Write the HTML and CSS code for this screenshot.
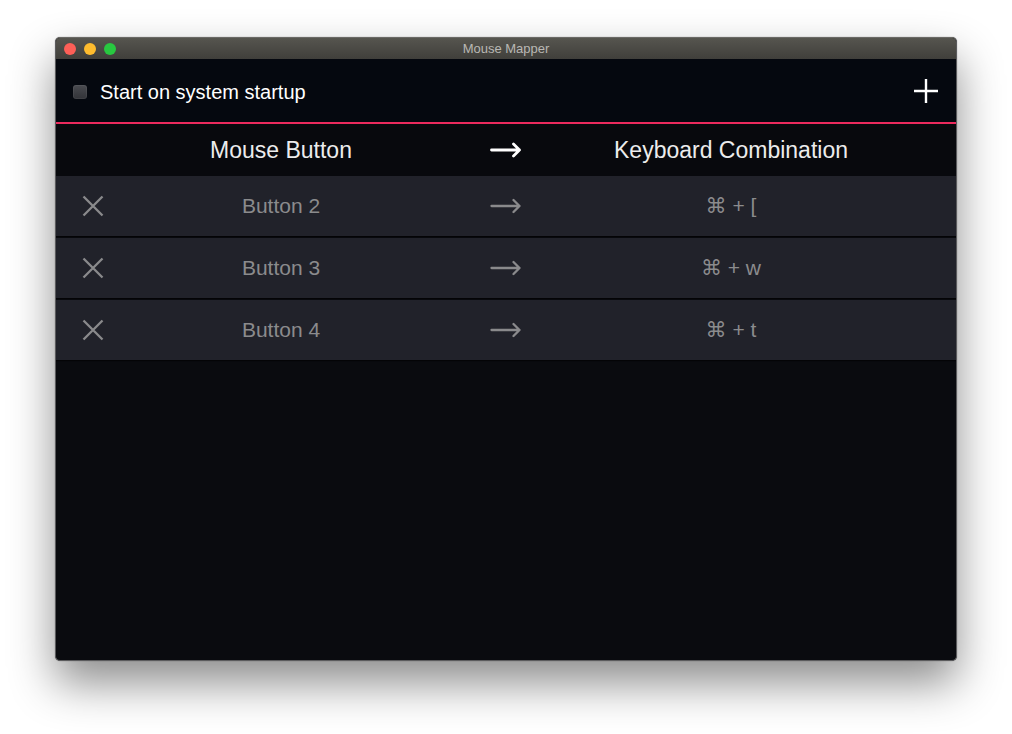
FILE: index.html
```html
<!DOCTYPE html>
<html>
<head>
<meta charset="utf-8">
<link rel="stylesheet" href="styles.css">
</head>
<body>
<div class="window">
  <div class="titlebar">
    <div class="lights">
      <span class="light red"></span>
      <span class="light yellow"></span>
      <span class="light green"></span>
    </div>
    <div class="title">Mouse Mapper</div>
  </div>
  <div class="toolbar">
    <label class="startup"><span class="checkbox"></span><span>Start on system startup</span></label>
    <svg class="plus" width="26" height="26" viewBox="0 0 26 26"><path d="M13 1V25M1 13H25" stroke="#fff" stroke-width="2.4" fill="none"/></svg>
  </div>
  <div class="colhead">
    <div class="cell">Mouse Button</div>
    <div class="arrowcell"><svg width="32" height="16" viewBox="0 0 32 16"><path d="M1.5 8H29.5M23.5 2L29.5 8L23.5 14" stroke="#fff" stroke-width="2.8" fill="none" stroke-linecap="round" stroke-linejoin="round"/></svg></div>
    <div class="cell">Keyboard Combination</div>
  </div>
  <div class="rows">
    <div class="row">
      <svg class="del" width="22" height="22" viewBox="0 0 22 22"><path d="M1.5 1.5L20.5 20.5M20.5 1.5L1.5 20.5" stroke="#8a8a8c" stroke-width="2.3" fill="none"/></svg>
      <div class="cell">Button 2</div>
      <div class="arrowcell"><svg width="32" height="16" viewBox="0 0 32 16"><path d="M1.5 8H29.5M23.5 2L29.5 8L23.5 14" stroke="#8a8a8c" stroke-width="2.3" fill="none" stroke-linecap="round" stroke-linejoin="round"/></svg></div>
      <div class="cell">⌘ + [</div>
    </div>
    <div class="row">
      <svg class="del" width="22" height="22" viewBox="0 0 22 22"><path d="M1.5 1.5L20.5 20.5M20.5 1.5L1.5 20.5" stroke="#8a8a8c" stroke-width="2.3" fill="none"/></svg>
      <div class="cell">Button 3</div>
      <div class="arrowcell"><svg width="32" height="16" viewBox="0 0 32 16"><path d="M1.5 8H29.5M23.5 2L29.5 8L23.5 14" stroke="#8a8a8c" stroke-width="2.3" fill="none" stroke-linecap="round" stroke-linejoin="round"/></svg></div>
      <div class="cell">⌘ + w</div>
    </div>
    <div class="row">
      <svg class="del" width="22" height="22" viewBox="0 0 22 22"><path d="M1.5 1.5L20.5 20.5M20.5 1.5L1.5 20.5" stroke="#8a8a8c" stroke-width="2.3" fill="none"/></svg>
      <div class="cell">Button 4</div>
      <div class="arrowcell"><svg width="32" height="16" viewBox="0 0 32 16"><path d="M1.5 8H29.5M23.5 2L29.5 8L23.5 14" stroke="#8a8a8c" stroke-width="2.3" fill="none" stroke-linecap="round" stroke-linejoin="round"/></svg></div>
      <div class="cell">⌘ + t</div>
    </div>
  </div>
</div>
</body>
</html>
```

FILE: styles.css
```css
html, body {
  margin: 0;
  padding: 0;
  background: #ffffff;
  font-family: "Liberation Sans", "DejaVu Sans", sans-serif;
}
body {
  padding: 37px 0 0 55px;
  height: 734px;
  box-sizing: border-box;
  overflow: hidden;
}
.window {
  width: 900px;
  height: 622px;
  border: 1px solid #5b5b5d;
  border-top-color: #6a6965;
  border-radius: 5px;
  overflow: hidden;
  background: #0a0b0f;
  box-shadow: 0 22px 45px rgba(0, 0, 0, 0.45), 0 0 1px rgba(0,0,0,0.6);
  display: flex;
  flex-direction: column;
}
.titlebar {
  height: 21px;
  background: linear-gradient(#56554f, #403f3b);
  display: grid;
  grid-template-columns: 1fr;
  align-items: center;
  flex: none;
}
.lights, .title {
  grid-area: 1 / 1;
}
.lights {
  display: flex;
  gap: 8px;
  padding-left: 8px;
}
.light {
  width: 12px;
  height: 12px;
  border-radius: 50%;
}
.red { background: #fd5f57; }
.yellow { background: #febc2e; }
.green { background: #28c840; }
.title {
  text-align: center;
  color: #b9b8b4;
  font-size: 13px;
  line-height: 21px;
}
.toolbar {
  height: 63px;
  background: #05080f;
  border-bottom: 2px solid #ec2a5d;
  display: flex;
  align-items: center;
  justify-content: space-between;
  padding: 0 17px 0 17px;
  flex: none;
}
.startup {
  display: flex;
  align-items: center;
  gap: 13px;
  color: #ffffff;
  font-size: 20px;
  margin-top: 4px;
}
.checkbox {
  width: 14px;
  height: 14px;
  border-radius: 3px;
  background: linear-gradient(#4a4b50, #323338);
  box-shadow: inset 0 0 0 1px rgba(255,255,255,0.06);
  margin-top: -1px;
}
.plus {
  margin-top: 0;
}
.colhead {
  height: 52px;
  background: #08090d;
  display: grid;
  grid-template-columns: 1fr 0 1fr;
  align-items: center;
  color: #ececec;
  font-size: 23px;
  flex: none;
}
.cell {
  grid-row: 1;
  text-align: center;
  justify-self: center;
}
.arrowcell {
  grid-row: 1;
  grid-column: 2;
  display: flex;
  justify-content: center;
  width: 0;
  overflow: visible;
}
.arrowcell svg {
  flex: none;
}
.colhead .cell:first-child,
.row .cell:nth-of-type(1) {
  grid-column: 1;
}
.colhead .cell:last-child,
.row .cell:last-child {
  grid-column: 3;
}
.rows {
  display: flex;
  flex-direction: column;
  gap: 2px;
}
.row {
  height: 60px;
  background: #21222a;
  display: grid;
  grid-template-columns: 1fr 0 1fr;
  align-items: center;
  color: #8b8b8d;
  font-size: 21px;
  box-shadow: 0 1px 1px rgba(0,0,0,0.6);
}
.del {
  grid-row: 1;
  grid-column: 1;
  justify-self: start;
  margin-left: 26px;
}
```
